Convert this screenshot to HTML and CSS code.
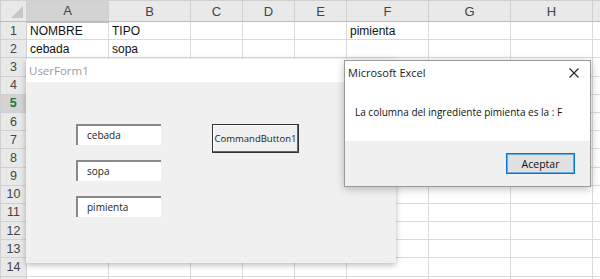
FILE: index.html
```html
<!DOCTYPE html>
<html lang="es">
<head>
  <meta charset="UTF-8">
  <title>Excel - UserForm1</title>
  <link rel="stylesheet" href="styles.css">
</head>
<body>

  <div class="sheet">
    <table class="grid">
      <colgroup>
        <col class="c-row"><col class="c-wide"><col class="c-wide"><col class="c-narrow"><col class="c-narrow"><col class="c-narrow"><col class="c-wide"><col class="c-wide"><col class="c-wide"><col class="c-rest">
      </colgroup>
      <tr class="head">
        <th class="corner"><span class="tri"></span></th>
        <th class="sel-col">A</th><th>B</th><th>C</th><th>D</th><th>E</th><th>F</th><th>G</th><th>H</th><th></th>
      </tr>
      <tr><th>1</th><td>NOMBRE</td><td>TIPO</td><td></td><td></td><td></td><td>pimienta</td><td></td><td></td><td></td></tr>
      <tr><th>2</th><td>cebada</td><td>sopa</td><td></td><td></td><td></td><td></td><td></td><td></td><td></td></tr>
      <tr><th>3</th><td></td><td></td><td></td><td></td><td></td><td></td><td></td><td></td><td></td></tr>
      <tr><th>4</th><td></td><td></td><td></td><td></td><td></td><td></td><td></td><td></td><td></td></tr>
      <tr><th class="sel-row">5</th><td></td><td></td><td></td><td></td><td></td><td></td><td></td><td></td><td></td></tr>
      <tr><th>6</th><td></td><td></td><td></td><td></td><td></td><td></td><td></td><td></td><td></td></tr>
      <tr><th>7</th><td></td><td></td><td></td><td></td><td></td><td></td><td></td><td></td><td></td></tr>
      <tr><th>8</th><td></td><td></td><td></td><td></td><td></td><td></td><td></td><td></td><td></td></tr>
      <tr><th>9</th><td></td><td></td><td></td><td></td><td></td><td></td><td></td><td></td><td></td></tr>
      <tr><th>10</th><td></td><td></td><td></td><td></td><td></td><td></td><td></td><td></td><td></td></tr>
      <tr><th>11</th><td></td><td></td><td></td><td></td><td></td><td></td><td></td><td></td><td></td></tr>
      <tr><th>12</th><td></td><td></td><td></td><td></td><td></td><td></td><td></td><td></td><td></td></tr>
      <tr><th>13</th><td></td><td></td><td></td><td></td><td></td><td></td><td></td><td></td><td></td></tr>
      <tr><th>14</th><td></td><td></td><td></td><td></td><td></td><td></td><td></td><td></td><td></td></tr>
      <tr><th></th><td></td><td></td><td></td><td></td><td></td><td></td><td></td><td></td><td></td></tr>
    </table>

    <!-- the VBA form -->
    <div class="window userform">
      <div class="titlebar"><span class="title muted">UserForm1</span></div>
      <div class="form-body">
        <div class="fields">
          <div class="textbox">cebada</div>
          <div class="textbox">sopa</div>
          <div class="textbox">pimienta</div>
        </div>
        <button class="cmd">CommandButton1</button>
      </div>
    </div>

    <!-- MsgBox -->
    <div class="window msgbox">
      <div class="titlebar">
        <span class="title">Microsoft Excel</span>
        <svg class="close" width="10" height="10" viewBox="0 0 10 10"><path d="M0.5 0.5 L9.5 9.5 M9.5 0.5 L0.5 9.5" stroke="#222" stroke-width="1.1" fill="none"/></svg>
      </div>
      <div class="msg-text">La columna del ingrediente pimienta es la : F</div>
      <div class="msg-foot">
        <button class="ok">Aceptar</button>
      </div>
    </div>
  </div>

</body>
</html>
```

FILE: styles.css
```css
html, body { margin: 0; padding: 0; background: #fff; }
body { width: 600px; height: 279px; overflow: hidden; font-family: "Liberation Sans", Arial, sans-serif; }

.sheet { position: relative; width: 600px; height: 279px; overflow: hidden; }

.grid { border-collapse: collapse; table-layout: fixed; width: 600px; }
.c-row { width: 26px; }
.c-wide { width: 82px; }
.c-narrow { width: 52px; }
.c-rest { width: 9px; }

.grid tr { height: 18.2px; }
.grid td, .grid th { padding: 0; border: 1px solid #dadada; font-weight: normal; white-space: nowrap; overflow: hidden; }
.grid td { font-size: 12px; color: #111; padding-left: 3px; border-top-color: #e1e1e1; }
.grid th { background: #e9e9e9; color: #444; font-size: 12.5px; text-align: center; border-color: #d0d0d0; }
.grid tr.head { height: 21px; }
.grid tr.head th { font-size: 13px; color: #444; border-bottom-color: #bdbdbd; }
.grid th.sel-col { background: #d3d3d3; color: #217346; border-bottom: 2px solid #217346; }
.grid th.sel-row { background: #d3d3d3; color: #217346; border-right: 2px solid #217346; font-weight: bold; }

.corner { position: relative; }
.tri { position: absolute; right: 3px; bottom: 3px; width: 0; height: 0; border-left: 12px solid transparent; border-bottom: 12px solid #c6c6c6; }

/* windows floating over the sheet */
.window { position: absolute; font-family: "Open Sans", "Noto Sans", sans-serif; }
.titlebar { display: flex; align-items: center; justify-content: space-between; background: #fff; height: 23px; padding: 0 3px; box-sizing: border-box; }
.title { font-size: 11px; color: #222; }
.title.muted { color: #9a9a9a; font-size: 11.5px; }

.userform { left: 26px; top: 59px; width: 370px; height: 204px; background: #f0f0f0; box-shadow: 0 2px 6px rgba(0,0,0,0.28); display: flex; flex-direction: column; }
.form-body { flex: 1; display: flex; align-items: flex-start; padding: 42px 0 0 50px; gap: 51px; }
.fields { display: flex; flex-direction: column; gap: 15px; }
.textbox { width: 85px; height: 21px; box-sizing: border-box; background: #fff; border-top: 2px solid #8a8a8a; border-left: 2px solid #8a8a8a; padding: 2px 0 0 9px; font-size: 10px; color: #222; }
.cmd { width: 87px; height: 29px; margin: 0; padding: 0; background: #f0f0f0; border: 1px solid #333; box-shadow: inset -1px -1px 0 #666, inset 1px 1px 0 #fff; font-family: inherit; font-size: 9.5px; color: #222; }

.msgbox { left: 344px; top: 60px; width: 247px; height: 127px; background: #fff; border: 1px solid #9a9a9a; box-sizing: border-box; box-shadow: 0 2px 8px rgba(0,0,0,0.25); display: flex; flex-direction: column; }
.close { margin-right: 8px; }
.msg-text { flex: 1; padding: 21px 0 0 10px; font-size: 10px; color: #111; }
.msg-foot { height: 45px; background: #f0f0f0; display: flex; justify-content: flex-end; align-items: flex-start; padding: 12px 15px 0 0; box-sizing: border-box; }
.ok { width: 69px; height: 21px; margin: 0; padding: 0; background: #e1e1e1; border: 1px solid #0078d7; box-shadow: inset 0 0 0 1px #6aa9e0; font-family: inherit; font-size: 10.5px; color: #111; }
```
